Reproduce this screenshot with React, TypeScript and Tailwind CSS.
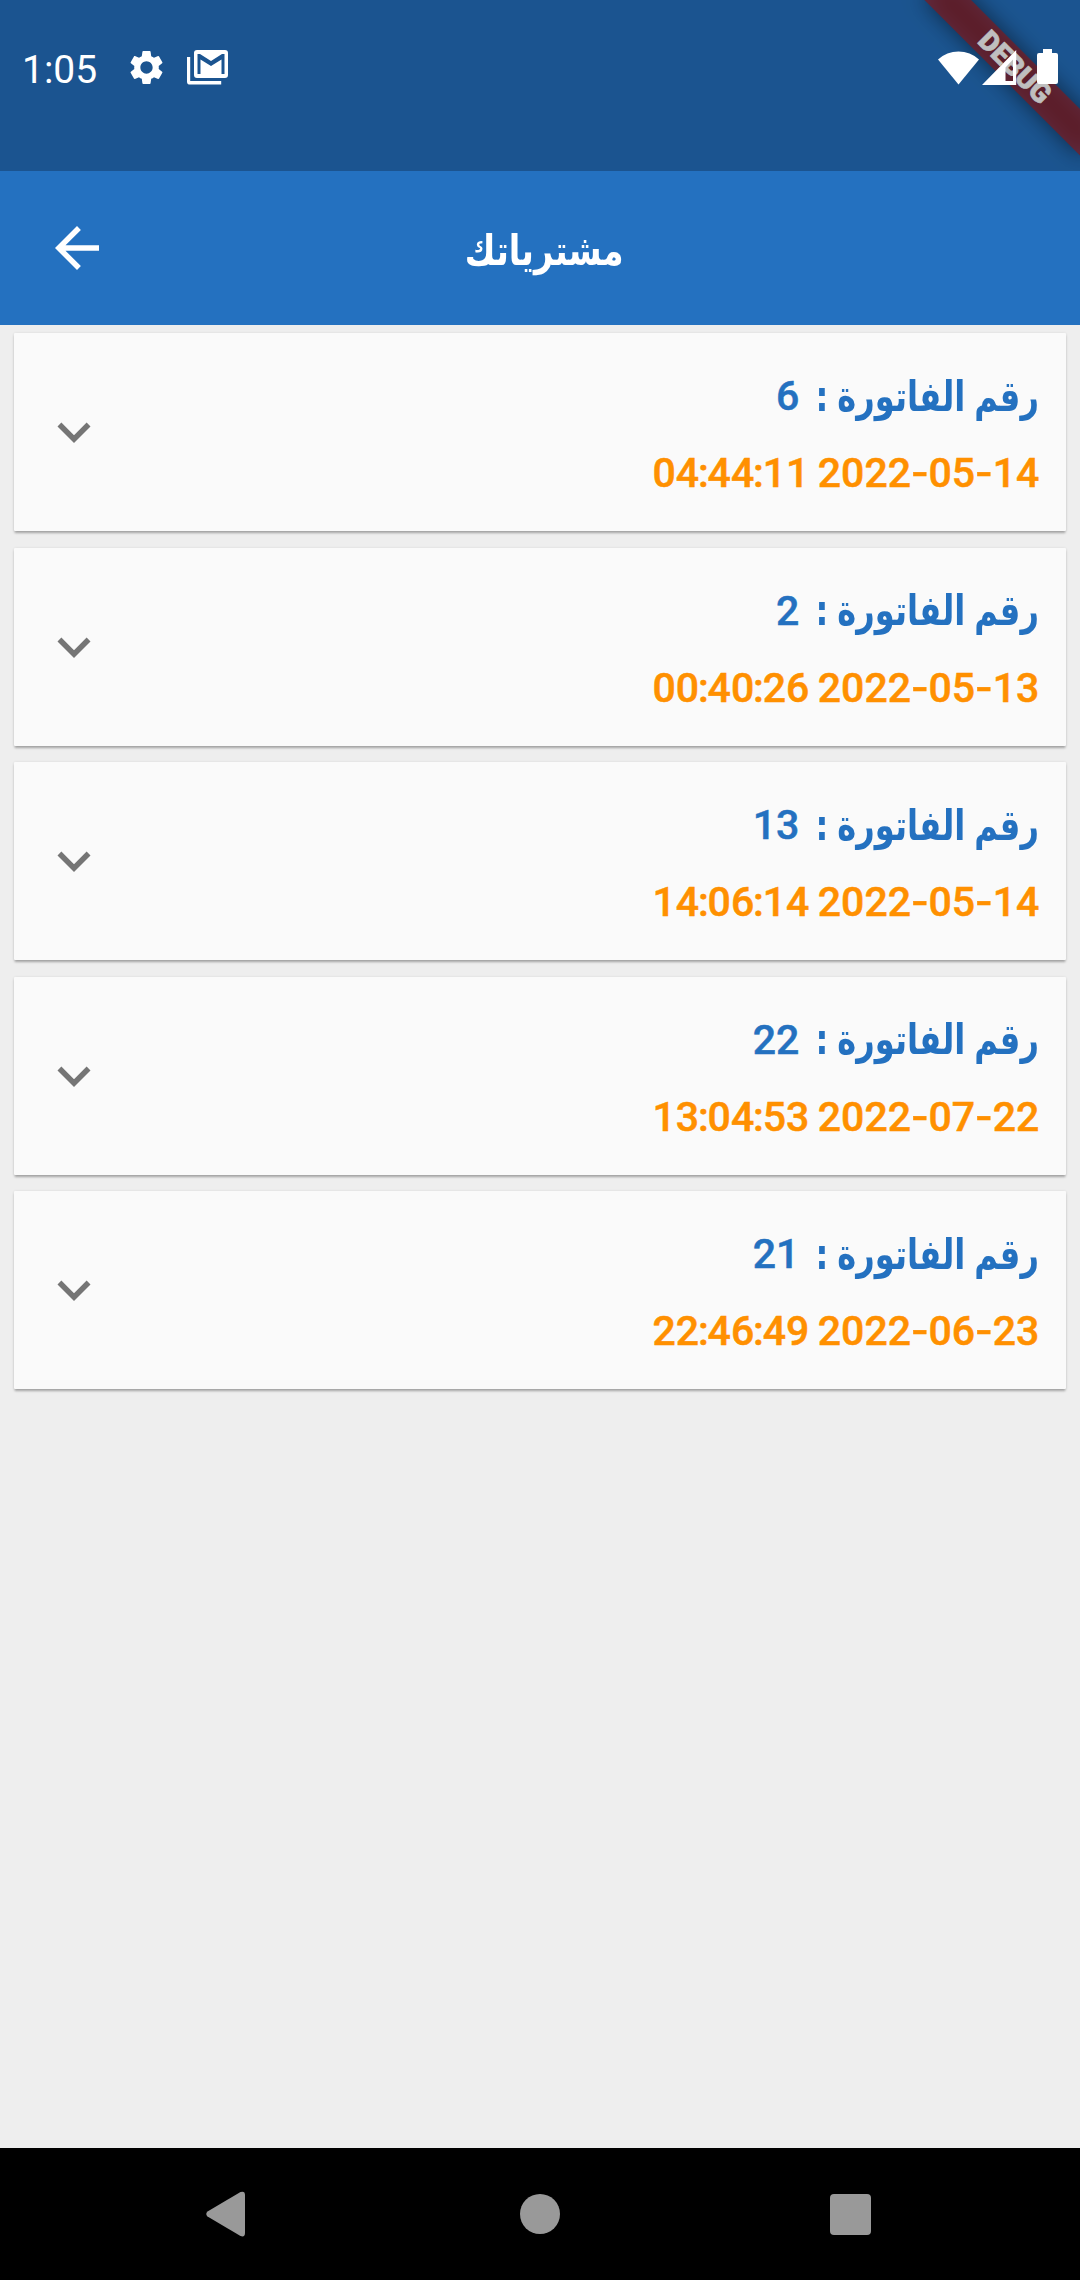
import { MdArrowBack, MdExpandMore, MdSettings } from "react-icons/md";

const invoices = [
  { id: "6", date: "2022-05-14", time: "04:44:11" },
  { id: "2", date: "2022-05-13", time: "00:40:26" },
  { id: "13", date: "2022-05-14", time: "14:06:14" },
  { id: "22", date: "2022-07-22", time: "13:04:53" },
  { id: "21", date: "2022-06-23", time: "22:46:49" },
];

function DebugBanner() {
  return (
    <div className="absolute top-0 left-[1080px] size-0 rotate-45">
      <div className="absolute top-[77px] left-[-110px] h-[33px] w-[220px] bg-black/50 blur-[11px]" />
      <div className="absolute top-[77px] left-[-110px] flex h-[33px] w-[220px] items-center justify-center bg-[#b71c1c]/63 pl-[3px] text-[28px] leading-none font-black text-white [-webkit-text-stroke:0.7px_white]">
        DEBUG
      </div>
    </div>
  );
}

function StatusBar() {
  return (
    <div className="relative flex h-[171px] items-start bg-black/25 text-white">
      <span className="mt-[47px] ml-[22px] w-[85px] text-[39px] leading-[46px]">1:05</span>
      <MdSettings className="mt-[47px] ml-[19px] size-[41px]" />
      <svg className="mt-[50px] ml-[20px] h-[35px] w-[41px]" viewBox="0 0 41 35" fill="currentColor">
        <path d="M0 7h3.200v24h31v3.600H3.200A3.200 3.200 0 0 1 0 31.400z" />
        <path
          fillRule="evenodd"
          d="M10 0h28a3 3 0 0 1 3 3v22a3 3 0 0 1-3 3H10a3 3 0 0 1-3-3V3a3 3 0 0 1 3-3zM10.500 4v20h3V9.500l10.500 6.500 10.500-6.500V24h3V4h-2.500L24 11 13 4z"
        />
      </svg>
      <div className="flex-1" />
      <svg className="mt-[50px] h-[35px] w-[41px]" viewBox="0 0 41 35" fill="currentColor">
        <path d="M0 9.500A30 30 0 0 1 41 9.500L20.500 34.500z" />
      </svg>
      <svg className="mt-[50px] ml-[3px] h-[35px] w-[35px]" viewBox="0 0 35 35" fill="currentColor">
        <path fillRule="evenodd" d="M0 35L34.200 0V35zM23.500 17.500V31h7.500V9.500z" />
      </svg>
      <svg className="mt-[49px] mr-[22px] ml-[20px] h-[35px] w-[21px]" viewBox="0 0 21 35" fill="currentColor">
        <path d="M6 0h9v4h4a2 2 0 0 1 2 2v27a2 2 0 0 1-2 2H2a2 2 0 0 1-2-2V6a2 2 0 0 1 2-2h4z" />
      </svg>
    </div>
  );
}

function Digits({ value }: { value: string }) {
  return (
    <span dir="ltr" className="flex">
      {value.split(/([-:])/).map((part, i) => {
        if (part === "-") {
          return (
            <span key={i} className="flex w-[17.500px] justify-center">
              <span className="inline-block scale-x-[1.2]">-</span>
            </span>
          );
        }
        if (part === ":") {
          return (
            <span key={i} className="flex w-[8.500px] justify-center">
              :
            </span>
          );
        }
        return <span key={i}>{part}</span>;
      })}
    </span>
  );
}

function InvoiceCard({ id, date, time }: { id: string; date: string; time: string }) {
  return (
    <div
      dir="rtl"
      className="flex h-[198px] items-center justify-between rounded-[1px] bg-[#fafafa] px-[27px] shadow-[0_3px_2px_-1px_rgba(0,0,0,0.2),0_2px_3px_rgba(0,0,0,0.12),0_0_3px_rgba(0,0,0,0.08)]"
    >
      <div className="flex flex-col gap-[17px] pt-[6px] font-medium">
        <div className="flex h-[60px] items-center text-[#2471c0]">
          <span className="flex w-[224px]">
            <span className="shrink-0 origin-right scale-x-[0.765] font-['DejaVu_Sans'] text-[42px] leading-[58px] font-bold tracking-normal whitespace-nowrap [word-spacing:-3px]">
              رقم الفاتورة :
            </span>
          </span>
          <span className="mr-[16px] text-[41px] [-webkit-text-stroke:0.5px_#2471c0]">{id}</span>
        </div>
        <div className="flex h-[60px] items-center gap-[8.500px] text-[41px] text-[#ff9000] [-webkit-text-stroke:0.5px_#ff9000]">
          <Digits value={date} />
          <Digits value={time} />
        </div>
      </div>
      <MdExpandMore className="size-[66px] text-[#757575]" />
    </div>
  );
}

export default function App() {
  return (
    <div className="relative flex h-[2280px] w-[1080px] flex-col overflow-hidden bg-[#eeeeee] font-['Roboto',sans-serif]">
      <div className="relative overflow-hidden bg-[#2471c0]">
        <DebugBanner />
        <StatusBar />
      </div>
      <header className="relative flex h-[154px] items-center justify-center bg-[#2471c0] text-white">
        <MdArrowBack className="absolute left-[44px] size-[66px]" />
        <h1
          dir="rtl"
          className="mt-[4px] ml-[8px] scale-x-[0.8] font-['DejaVu_Sans'] text-[42px] font-bold whitespace-nowrap"
        >
          مشترياتك
        </h1>
      </header>
      <main className="flex flex-1 flex-col gap-[16.500px] px-[13.750px] pt-[8.250px]">
        {invoices.map((inv) => (
          <InvoiceCard key={inv.id} {...inv} />
        ))}
      </main>
      <nav className="relative flex h-[132px] items-center justify-between bg-black pr-[209px] pl-[206px] text-[#999999]">
        <svg className="h-[46px] w-[40px]" viewBox="0 0 40 46" fill="currentColor">
          <path d="M1.500 20.500L34.500 1Q39 -.5 39 4V42Q39 46.500 34.500 45L1.500 25.500Q-1 23 1.500 20.500z" />
        </svg>
        <div className="ml-[4px] size-[40px] rounded-full bg-[#999999]" />
        <div className="size-[41px] rounded-[4px] bg-[#999999]" />
      </nav>
    </div>
  );
}
